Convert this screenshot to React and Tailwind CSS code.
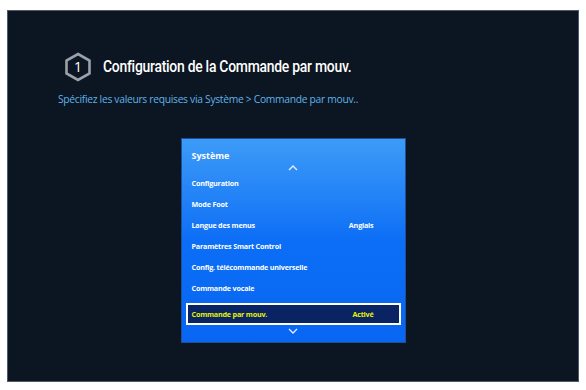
import React from 'react';

const rows = [
  { label: 'Configuration' },
  { label: 'Mode Foot' },
  { label: 'Langue des menus', value: 'Anglais' },
  { label: 'Paramètres Smart Control' },
  { label: 'Config. télécommande universelle' },
  { label: 'Commande vocale' },
];

const Hexagon = () => (
  <div className="relative w-[28px] h-[30px] flex items-center justify-center">
    <svg width="28" height="30" viewBox="0 0 28 30" className="absolute inset-0">
      <polygon points="14,2 25.5,8.5 25.5,21.5 14,28 2.5,21.5 2.5,8.5" fill="none" stroke="#9aa1a8" strokeWidth="2.6" />
    </svg>
    <span className="relative text-white text-[14px] leading-none">1</span>
  </div>
);

const Chevron = ({ up }) => (
  <svg width="10" height="6" viewBox="0 0 10 6">
    <path d={up ? 'M1 5 L5 1 L9 5' : 'M1 1 L5 5 L9 1'} fill="none" stroke="#e8f0ff" strokeWidth="1.3" />
  </svg>
);

export default function App() {
  return (
    <div className="w-[586px] h-[390px] bg-white pt-[10px] pl-[7px]" style={{ fontFamily: '"Open Sans", "Noto Sans", sans-serif' }}>
      <div className="w-[572px] h-[372px] bg-[#0c1522] border border-[#505a66] flex flex-col">
        {/* Header */}
        <div className="flex items-center gap-[11px] pl-[56px] pt-[41px]">
          <Hexagon />
          <h1 className="text-white text-[16px] font-medium tracking-[-0.3px] leading-none whitespace-nowrap scale-x-[0.87] origin-left" style={{ fontFamily: 'Roboto, sans-serif' }}>Configuration de la Commande par mouv.</h1>
        </div>
        <p className="pl-[50px] pt-[12px] text-[#5fb4e6] text-[10.3px] tracking-[-0.3px] leading-none">
          Spécifiez les valeurs requises via Système &gt; Commande par mouv..
        </p>

        {/* Menu panel */}
        <div className="mx-auto mt-[34px] w-[225px] h-[205px] bg-gradient-to-b from-[#3d9bf7] via-[#0c6ef6] to-[#0866f2] border border-[#1d4f9a] flex flex-col px-[4px]">
          <div className="pl-[6px] pt-[12px] text-white text-[9px] font-bold leading-none">Système</div>
          <div className="flex justify-center mt-[5px] h-[8px]"><Chevron up /></div>
          <div className="flex flex-col">
            {rows.map(r => (
              <div key={r.label} className="h-[21px] flex items-center justify-between pl-[6px] pr-[27px] text-white text-[7.2px] font-bold tracking-[-0.2px]">
                <span>{r.label}</span>
                {r.value && <span>{r.value}</span>}
              </div>
            ))}
          </div>
          <div className="mt-[4px] h-[22px] border-2 border-white bg-[#0a2362] flex items-center justify-between pl-[4px] pr-[25px] text-[#e6f500] text-[7.2px] font-bold tracking-[-0.2px]">
            <span>Commande par mouv.</span>
            <span>Activé</span>
          </div>
          <div className="flex justify-center mt-[3px]"><Chevron /></div>
        </div>
      </div>
    </div>
  );
}
